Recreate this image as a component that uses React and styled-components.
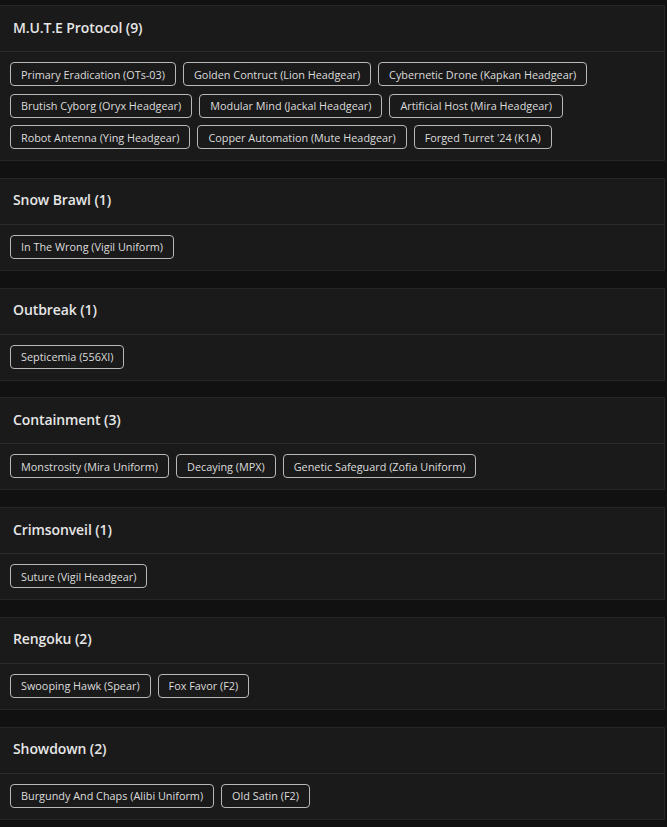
import React from "react";
import styled, { createGlobalStyle } from "styled-components";

const Global = createGlobalStyle`
  html, body { margin: 0; padding: 0; background: #111111; }
  body { font-family: "Open Sans", "Noto Sans", sans-serif; }
`;

const Page = styled.div`
  display: flex;
  flex-direction: column;
  gap: 16.75px;
  padding: 5px 2px 0 0;
`;

const Card = styled.section`
  background: #1a1a1a;
  border: 1px solid #262626;
  border-left: none;
`;

const Header = styled.div`
  height: 46px;
  box-sizing: border-box;
  display: flex;
  align-items: center;
  padding: 0 13px 3px;
  border-bottom: 1px solid #2c2c2c;
  color: #e6e6e6;
  font-size: 14px;
  font-weight: 600;
  letter-spacing: -0.1px;
`;

const Body = styled.div`
  display: flex;
  flex-wrap: wrap;
  gap: 7.5px 7px;
  padding: 10px 10px 11px;
`;

const Chip = styled.span`
  display: inline-flex;
  align-items: center;
  height: 24px;
  box-sizing: border-box;
  padding: 0 10px;
  border: 1px solid #b8b8b8;
  border-radius: 4px;
  color: #dcdcdc;
  font-size: 10.85px;
  white-space: nowrap;
`;

const data = [
  ["M.U.T.E Protocol", [
    "Primary Eradication (OTs-03)", "Golden Contruct (Lion Headgear)", "Cybernetic Drone (Kapkan Headgear)",
    "Brutish Cyborg (Oryx Headgear)", "Modular Mind (Jackal Headgear)", "Artificial Host (Mira Headgear)",
    "Robot Antenna (Ying Headgear)", "Copper Automation (Mute Headgear)", "Forged Turret '24 (K1A)",
  ]],
  ["Snow Brawl", ["In The Wrong (Vigil Uniform)"]],
  ["Outbreak", ["Septicemia (556XI)"]],
  ["Containment", ["Monstrosity (Mira Uniform)", "Decaying (MPX)", "Genetic Safeguard (Zofia Uniform)"]],
  ["Crimsonveil", ["Suture (Vigil Headgear)"]],
  ["Rengoku", ["Swooping Hawk (Spear)", "Fox Favor (F2)"]],
  ["Showdown", ["Burgundy And Chaps (Alibi Uniform)", "Old Satin (F2)"]],
];

export default function App() {
  return (
    <>
      <Global />
      <Page>
        {data.map(([name, items]) => (
          <Card key={name}>
            <Header>{name} ({items.length})</Header>
            <Body>
              {items.map((it) => <Chip key={it}>{it}</Chip>)}
            </Body>
          </Card>
        ))}
      </Page>
    </>
  );
}
